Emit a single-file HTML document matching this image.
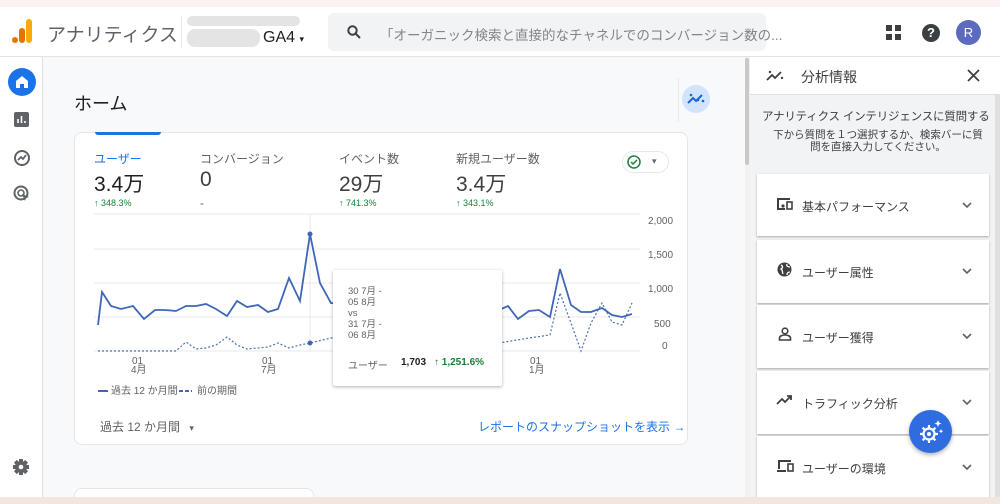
<!DOCTYPE html>
<html><head><meta charset="utf-8"><style>
*{box-sizing:border-box;margin:0;padding:0}
html,body{width:1000px;height:504px;overflow:hidden}
body{background:#f8f9fa;font-family:"Liberation Sans","Noto Sans CJK JP",sans-serif;color:#202124;position:relative}
.abs{position:absolute}
.hdr{left:0;top:7px;width:1000px;height:50px;background:#fff;border-bottom:1px solid #e3e3e3}
.nav{left:0;top:57px;width:43px;height:440px;background:#fff;border-right:1px solid #e0e0e0}
.card{background:#fff;border:1px solid #e6e6e6;border-radius:8px}
.q{left:757px;width:232px;height:63px;background:#fff;box-shadow:0 1px 2px rgba(0,0,0,.3);font-size:12px;color:#3c4043}
.q span{position:absolute;left:45px;top:24px}
.q svg.ch{position:absolute;right:17px;top:28px}
.sm{font-size:12px;color:#5f6368}
.g{color:#188038;font-size:9px}
</style></head><body>
<div class="abs" style="left:0;top:0;width:1000px;height:7px;background:#fbf3ef"></div>
<div class="abs hdr">
 <svg class="abs" style="left:11px;top:12px" width="22" height="24"><rect x="15" y="0" width="6" height="24" rx="3" fill="#f9ab00"/><rect x="8" y="9" width="6" height="15" rx="3" fill="#e37400"/><circle cx="4" cy="21" r="3" fill="#e37400"/></svg>
 <div class="abs" style="left:47px;top:13px;font-size:19px;color:#5f6368">アナリティクス</div>
 <div class="abs" style="left:181px;top:9px;width:1px;height:32px;background:#e8e8e8"></div>
 <div class="abs" style="left:187px;top:9px;width:113px;height:10px;border-radius:5px;background:#e4e4e4"></div>
 <div class="abs" style="left:187px;top:22px;width:73px;height:18px;border-radius:8px;background:#e4e4e4"></div>
 <div class="abs" style="left:263px;top:22px;font-size:16px">GA4 <span style="font-size:9px">▾</span></div>
 <div class="abs" style="left:328px;top:6px;width:438px;height:38px;background:#f1f3f4;border-radius:6px"></div>
 <svg class="abs" style="left:347px;top:18px" width="14" height="14"><circle cx="5.5" cy="5.5" r="4.2" stroke="#3c4043" stroke-width="2" fill="none"/><path d="M8.5 8.5L13 13" stroke="#3c4043" stroke-width="2"/></svg>
 <div class="abs" style="left:380px;top:17px;font-size:13.5px;color:#80868b;white-space:nowrap">「オーガニック検索と直接的なチャネルでのコンバージョン数の...</div>
 <svg class="abs" style="left:886px;top:18px" width="16" height="16" fill="#3c4043"><rect x="0" y="0" width="6" height="6"/><rect x="9" y="0" width="6" height="6"/><rect x="0" y="9" width="6" height="6"/><rect x="9" y="9" width="6" height="6"/></svg>
 <div class="abs" style="left:922px;top:17px;width:18px;height:18px;border-radius:50%;background:#3c4043;color:#fff;font-size:13px;font-weight:bold;text-align:center;line-height:18px">?</div>
 <div class="abs" style="left:956px;top:13px;width:25px;height:25px;border-radius:50%;background:#5c6bc0;color:#fff;font-size:13px;text-align:center;line-height:25px">R</div>
</div>
<div class="abs nav">
 <div class="abs" style="left:8px;top:11px;width:28px;height:28px;border-radius:50%;background:#1a73e8"></div>
 <svg class="abs" style="left:14px;top:17px" width="16" height="16"><path d="M2 7L8 2l6 5v7h-4v-4H6v4H2z" fill="#fff"/></svg>
 <svg class="abs" style="left:14px;top:55px" width="15" height="15"><rect width="15" height="15" rx="2" fill="#5f6368"/><path d="M4 11V7M7.5 11V4M11 11V9" stroke="#fff" stroke-width="1.6"/></svg>
 <svg class="abs" style="left:13px;top:92px" width="18" height="18"><circle cx="9" cy="9" r="7" stroke="#5f6368" stroke-width="2" fill="none"/><path d="M5 11l3-3 2 2 3-4" stroke="#5f6368" stroke-width="1.8" fill="none"/></svg>
 <svg class="abs" style="left:13px;top:128px" width="18" height="18"><circle cx="8" cy="8" r="6.5" stroke="#5f6368" stroke-width="2" fill="none"/><circle cx="8" cy="8" r="3" stroke="#5f6368" stroke-width="1.6" fill="none"/><path d="M9 9l7 3-3 1-1 3z" fill="#5f6368"/></svg>
 <svg class="abs" style="left:12px;top:401px" width="18" height="18" viewBox="0 0 18 18"><g fill="#5f6368" transform="translate(9 9)"><rect x="-2" y="-8" width="4" height="16"/><rect x="-2" y="-8" width="4" height="16" transform="rotate(45)"/><rect x="-2" y="-8" width="4" height="16" transform="rotate(90)"/><rect x="-2" y="-8" width="4" height="16" transform="rotate(135)"/><circle r="6"/></g><circle cx="9" cy="9" r="2.3" fill="#fff"/></svg>
</div>
<div class="abs" style="left:74px;top:90px;font-size:18px">ホーム</div>
<div class="abs" style="left:678px;top:78px;width:1px;height:44px;background:#e8e8e8"></div>
<div class="abs" style="left:682px;top:85px;width:28px;height:28px;border-radius:50%;background:#d2e3fc"></div>
<svg class="abs" style="left:687px;top:91px" width="18" height="14"><path d="M1 12l5-5 3 3 6-6" stroke="#1967d2" stroke-width="2" fill="none"/><circle cx="4" cy="4" r="1.3" fill="#1967d2"/><circle cx="11" cy="9" r="1.3" fill="#1967d2"/><circle cx="16" cy="10" r="1.3" fill="#1967d2"/></svg>
<div class="abs card" style="left:74px;top:132px;width:614px;height:313px"></div>
<div class="abs" style="left:95px;top:132px;width:66px;height:3px;background:#1a73e8;border-radius:0 0 3px 3px"></div>
<div class="abs sm" style="left:94px;top:150px;color:#1a73e8">ユーザー</div>
<div class="abs" style="left:94px;top:168px;font-size:21px">3.4万</div>
<div class="abs g" style="left:94px;top:198px">↑ 348.3%</div>
<div class="abs sm" style="left:200px;top:150px">コンバージョン</div>
<div class="abs" style="left:200px;top:168px;font-size:21px;color:#3c4043">0</div>
<div class="abs sm" style="left:200px;top:196px">-</div>
<div class="abs sm" style="left:339px;top:150px">イベント数</div>
<div class="abs" style="left:339px;top:168px;font-size:21px;color:#3c4043">29万</div>
<div class="abs g" style="left:339px;top:198px">↑ 741.3%</div>
<div class="abs sm" style="left:456px;top:150px">新規ユーザー数</div>
<div class="abs" style="left:456px;top:168px;font-size:21px;color:#3c4043">3.4万</div>
<div class="abs g" style="left:456px;top:198px">↑ 343.1%</div>
<div class="abs" style="left:622px;top:151px;width:47px;height:22px;border-radius:11px;border:1px solid #e8e8e8"></div>
<svg class="abs" style="left:627px;top:155px" width="14" height="14"><circle cx="7" cy="7" r="6" stroke="#188038" stroke-width="1.5" fill="none"/><path d="M4 7l2 2 4-4" stroke="#188038" stroke-width="1.5" fill="none"/></svg>
<div class="abs" style="left:652px;top:156px;font-size:9px;color:#5f6368">▾</div>
<svg class="abs" style="left:0;top:0" width="700" height="400">
 <g stroke="#e8e8e8" stroke-width="1"><path d="M94 214H640M94 249H640M94 283H640M94 317H640M94 351H640"/></g>
 <g stroke="#e8e8e8"><path d="M310 214V351"/></g>
 <polyline fill="none" stroke="#4a6fbd" stroke-width="1.2" stroke-dasharray="2 2" points="98,351 176,351 186,342 196,349 206,348 216,345 227,337 237,345 247,349 268,347 278,343 289,348 300,345 310,343 331,338 420,340 499,343 529,338 550,335 560,293 571,323 581,351 591,323 602,303 612,322 622,325 632,303"/>
 <polyline fill="none" stroke="#3f67b8" stroke-width="1.8" points="98,325 102,292 111,306 121,309 133,306 144,319 155,310 165,310 176,311 186,306 196,306 206,304 216,309 227,316 237,301 247,307 258,305 268,312 278,309 289,278 300,301 310,234 320,283 331,303 400,310 480,306 499,310 508,306 518,319 529,311 539,310 550,317 560,269 571,305 581,312 591,312 602,308 612,315 622,317 632,314"/>
 <circle cx="310" cy="234" r="2.5" fill="#3f67b8"/><circle cx="310" cy="343" r="2.5" fill="#3f67b8"/>
 <g font-size="10" fill="#5f6368" font-family="Liberation Sans,Noto Sans CJK JP,sans-serif">
  <text x="648" y="224">2,000</text><text x="648" y="258">1,500</text><text x="648" y="292">1,000</text><text x="654" y="327">500</text><text x="662" y="349">0</text>
  <text x="132" y="364">01</text><text x="131" y="373">4月</text>
  <text x="262" y="364">01</text><text x="261" y="373">7月</text>
  <text x="530" y="364">01</text><text x="529" y="373">1月</text>
  <text x="111" y="394">過去 12 か月間</text><text x="197" y="394">前の期間</text>
 </g>
 <path d="M98 391H108" stroke="#3f67b8" stroke-width="2"/><path d="M179 391H192" stroke="#3f67b8" stroke-width="2" stroke-dasharray="4 2"/>
</svg>
<div class="abs" style="left:333px;top:270px;width:169px;height:116px;background:#fff;box-shadow:0 1px 3px rgba(0,0,0,.3);border-radius:2px"></div>
<div class="abs" style="left:348px;top:286px;font-size:9.5px;line-height:11px;color:#5f6368">30 7月 -<br>05 8月<br>vs<br>31 7月 -<br>06 8月</div>
<div class="abs" style="left:348px;top:357px;font-size:10px;color:#5f6368">ユーザー</div>
<div class="abs" style="left:401px;top:357px;font-size:10px;font-weight:bold;color:#202124">1,703</div>
<div class="abs" style="left:434px;top:357px;font-size:10px;font-weight:bold;color:#188038">↑ 1,251.6%</div>
<div class="abs sm" style="left:100px;top:418px">過去 12 か月間 <span style="font-size:9px;margin-left:6px">▾</span></div>
<div class="abs" style="left:478px;top:418px;font-size:12px;color:#1a73e8">レポートのスナップショットを表示 →</div>
<div class="abs card" style="left:74px;top:488px;width:240px;height:30px"></div>
<div class="abs" style="left:745px;top:57px;width:5px;height:440px;background:#f1f1f1"></div>
<div class="abs" style="left:745px;top:58px;width:4px;height:107px;background:#c8c8c8;border-radius:2px"></div>
<div class="abs" style="left:750px;top:57px;width:250px;height:38px;background:#fff;border-bottom:1px solid #e0e0e0"></div>
<svg class="abs" style="left:766px;top:68px" width="18" height="14"><path d="M1 12l5-5 3 3 6-6" stroke="#3c4043" stroke-width="1.8" fill="none"/><circle cx="4" cy="4" r="1.2" fill="#3c4043"/><circle cx="16" cy="10" r="1.2" fill="#3c4043"/></svg>
<div class="abs" style="left:801px;top:67px;font-size:14px;color:#3c4043">分析情報</div>
<svg class="abs" style="left:967px;top:69px" width="13" height="13"><path d="M1 1l11 11M12 1L1 12" stroke="#3c4043" stroke-width="1.8"/></svg>
<div class="abs" style="left:750px;top:95px;width:250px;height:402px;background:#f1f3f4;border-right:5px solid #e0e0e0"></div>
<div class="abs" style="left:762px;top:108px;font-size:11.5px;color:#3c4043;white-space:nowrap;letter-spacing:-.2px">アナリティクス インテリジェンスに質問する</div>
<div class="abs" style="left:760px;top:129px;width:236px;text-align:center;font-size:10.5px;line-height:12px;color:#3c4043;white-space:nowrap">下から質問を１つ選択するか、検索バーに質<br>問を直接入力してください。</div>
<div class="abs q" style="top:174px;height:62px"><span>基本パフォーマンス</span><svg class="ch" width="10" height="6"><path d="M1 1l4 4 4-4" stroke="#5f6368" stroke-width="1.6" fill="none"/></svg></div>
<div class="abs q" style="top:240px"><span>ユーザー属性</span><svg class="ch" width="10" height="6"><path d="M1 1l4 4 4-4" stroke="#5f6368" stroke-width="1.6" fill="none"/></svg></div>
<div class="abs q" style="top:305px"><span>ユーザー獲得</span><svg class="ch" width="10" height="6"><path d="M1 1l4 4 4-4" stroke="#5f6368" stroke-width="1.6" fill="none"/></svg></div>
<div class="abs q" style="top:371px"><span>トラフィック分析</span><svg class="ch" width="10" height="6"><path d="M1 1l4 4 4-4" stroke="#5f6368" stroke-width="1.6" fill="none"/></svg></div>
<div class="abs q" style="top:436px"><span>ユーザーの環境</span><svg class="ch" width="10" height="6"><path d="M1 1l4 4 4-4" stroke="#5f6368" stroke-width="1.6" fill="none"/></svg></div>
<svg class="abs" style="left:776px;top:197px" width="18" height="14"><path d="M2 12V2h12" stroke="#3c4043" stroke-width="2" fill="none"/><path d="M1 12h8" stroke="#3c4043" stroke-width="2"/><rect x="11" y="5" width="5" height="7" stroke="#3c4043" stroke-width="1.6" fill="none"/><circle cx="7" cy="9" r="1.6" fill="#3c4043"/></svg>
<svg class="abs" style="left:777px;top:262px" width="15" height="15"><circle cx="7.5" cy="7.5" r="7" fill="#3c4043"/><path d="M4 3c2 1 2 3 0 4 2 1 1 3 2 5M10 2c-1 2 1 3 3 3M10 13c0-2 1-3 3-3" stroke="#fff" stroke-width="1.3" fill="none"/></svg>
<svg class="abs" style="left:778px;top:327px" width="14" height="14"><circle cx="7" cy="4" r="2.8" stroke="#3c4043" stroke-width="1.6" fill="none"/><path d="M1.5 13v-2c0-2 3-3 5.5-3s5.5 1 5.5 3v2z" stroke="#3c4043" stroke-width="1.6" fill="none"/></svg>
<svg class="abs" style="left:776px;top:394px" width="18" height="12"><path d="M1 10l5-5 3 3 6-6M11 2h4v4" stroke="#3c4043" stroke-width="1.8" fill="none"/></svg>
<svg class="abs" style="left:776px;top:459px" width="18" height="14"><path d="M3 10V2h12" stroke="#3c4043" stroke-width="2" fill="none"/><path d="M1 12h9" stroke="#3c4043" stroke-width="2"/><rect x="12" y="5" width="5" height="7" stroke="#3c4043" stroke-width="1.6" fill="none"/></svg>
<div class="abs" style="left:909px;top:410px;width:43px;height:43px;border-radius:50%;background:#2f6ce0;box-shadow:0 2px 4px rgba(0,0,0,.3)"></div>
<svg class="abs" style="left:917px;top:419px" width="28" height="26" viewBox="0 0 28 26"><g fill="none" stroke="#fff" stroke-width="2.2" transform="translate(12 15)"><circle r="5.5"/><path d="M0-9v3M0 6v3M-9 0h3M6 0h3M-6.4-6.4l2.1 2.1M4.3 4.3l2.1 2.1M-6.4 6.4l2.1-2.1M4.3-4.3l2.1-2.1"/></g><circle cx="12" cy="15" r="2" fill="#fff"/><path d="M21 1l1 2.5 2.5 1-2.5 1-1 2.5-1-2.5-2.5-1 2.5-1z M24 10l.7 1.5 1.5.7-1.5.7-.7 1.5-.7-1.5-1.5-.7 1.5-.7z" fill="#fff"/></svg>
<div class="abs" style="left:0;top:497px;width:1000px;height:7px;background:#f3e6e1;z-index:10"></div>
</body></html>
